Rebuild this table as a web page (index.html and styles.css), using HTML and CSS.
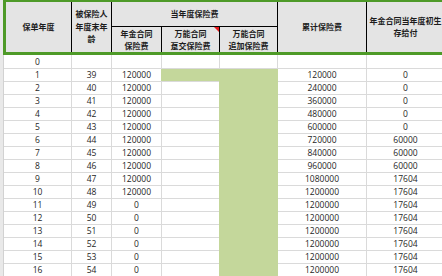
FILE: index.html
```html
<!DOCTYPE html>
<html lang="zh">
<head>
<meta charset="utf-8">
<title>保单年度表</title>
<link rel="stylesheet" href="styles.css">
</head>
<body>
<div class="sheet">
  <div class="strip"></div>
  <div class="main">
    <div class="head">
      <div class="hc span-rows c1">保单年度</div>
      <div class="hc span-rows c2">被保险人年度末年龄</div>
      <div class="hc group">当年度保险费</div>
      <div class="hc sub">年金合同<br>保险费</div>
      <div class="hc sub note">万能合同<br>趸交保险费<span class="tri"></span></div>
      <div class="hc sub">万能合同<br>追加保险费</div>
      <div class="hc span-rows c6">累计保险费</div>
      <div class="hc span-rows c7">年金合同当年度初生<br>存给付</div>
      <div class="hc span-rows c8"></div>
    </div>
    <div class="body">
      <div class="fill-col"></div>

      <div class="c">0</div><div class="c"></div><div class="c"></div><div class="c"></div><div class="c"></div><div class="c"></div><div class="c"></div><div class="c"></div>
      <div class="c">1</div><div class="c">39</div><div class="c">120000</div><div class="fill-row"></div><div class="c">120000</div><div class="c">0</div><div class="c"></div>
      <div class="c">2</div><div class="c">40</div><div class="c">120000</div><div class="c"></div><div class="c">240000</div><div class="c">0</div><div class="c"></div>
      <div class="c">3</div><div class="c">41</div><div class="c">120000</div><div class="c"></div><div class="c">360000</div><div class="c">0</div><div class="c"></div>
      <div class="c">4</div><div class="c">42</div><div class="c">120000</div><div class="c"></div><div class="c">480000</div><div class="c">0</div><div class="c"></div>
      <div class="c">5</div><div class="c">43</div><div class="c">120000</div><div class="c"></div><div class="c">600000</div><div class="c">0</div><div class="c"></div>
      <div class="c">6</div><div class="c">44</div><div class="c">120000</div><div class="c"></div><div class="c">720000</div><div class="c">60000</div><div class="c"></div>
      <div class="c">7</div><div class="c">45</div><div class="c">120000</div><div class="c"></div><div class="c">840000</div><div class="c">60000</div><div class="c"></div>
      <div class="c">8</div><div class="c">46</div><div class="c">120000</div><div class="c"></div><div class="c">960000</div><div class="c">60000</div><div class="c"></div>
      <div class="c">9</div><div class="c">47</div><div class="c">120000</div><div class="c"></div><div class="c">1080000</div><div class="c">17604</div><div class="c"></div>
      <div class="c">10</div><div class="c">48</div><div class="c">120000</div><div class="c"></div><div class="c">1200000</div><div class="c">17604</div><div class="c"></div>
      <div class="c">11</div><div class="c">49</div><div class="c">0</div><div class="c"></div><div class="c">1200000</div><div class="c">17604</div><div class="c"></div>
      <div class="c">12</div><div class="c">50</div><div class="c">0</div><div class="c"></div><div class="c">1200000</div><div class="c">17604</div><div class="c"></div>
      <div class="c">13</div><div class="c">51</div><div class="c">0</div><div class="c"></div><div class="c">1200000</div><div class="c">17604</div><div class="c"></div>
      <div class="c">14</div><div class="c">52</div><div class="c">0</div><div class="c"></div><div class="c">1200000</div><div class="c">17604</div><div class="c"></div>
      <div class="c">15</div><div class="c">53</div><div class="c">0</div><div class="c"></div><div class="c">1200000</div><div class="c">17604</div><div class="c"></div>
      <div class="c">16</div><div class="c">54</div><div class="c">0</div><div class="c"></div><div class="c">1200000</div><div class="c">17604</div><div class="c"></div>
    </div>
  </div>
</div>
</body>
</html>
```
FILE: styles.css
```css
html, body {
  margin: 0;
  padding: 0;
  width: 442px;
  height: 276px;
  background: #ffffff;
  overflow: hidden;
}

.sheet {
  display: flex;
  width: 442px;
  height: 276px;
  overflow: hidden;
}

.strip {
  flex: 0 0 3px;
  background: #e9e9e9;
}

.main {
  display: flex;
  flex-direction: column;
  align-items: flex-start;
  flex: 0 0 auto;
}

.head {
  display: grid;
  grid-template-columns: 65px 39px 49px 57px 57px 88px 77px 60px;
  grid-template-rows: 24px 25px;
  gap: 1px;
  background: #000000;
  border-top: 2px solid #4e9a28;
  border-left: 3px solid #4e9a28;
  border-bottom: 3px solid #4e9a28;
}

.hc {
  background: #e4e4e4;
  display: flex;
  align-items: center;
  justify-content: center;
  text-align: center;
  font-family: "Noto Sans CJK SC", "Noto Sans", sans-serif;
  font-weight: bold;
  font-size: 8px;
  line-height: 12.5px;
  color: #1c1c1c;
}

.span-rows {
  grid-row: 1 / 3;
}

.c1 { grid-column: 1; }
.c2 { grid-column: 2; padding: 0 3px; }
.c6 { grid-column: 6; }
.c7 { grid-column: 7; white-space: nowrap; }
.c8 { grid-column: 8; }

.group {
  grid-column: 3 / 6;
  grid-row: 1;
}

.sub {
  grid-row: 2;
  line-height: 12px;
}

.note {
  position: relative;
}

.tri {
  position: absolute;
  top: 0;
  right: 0;
  width: 0;
  height: 0;
  border-top: 5px solid #e8191c;
  border-left: 5px solid transparent;
}

.body {
  display: grid;
  grid-template-columns: 67px 39px 49px 57px 57px 88px 77px 60px;
  grid-template-rows: 13px repeat(16, 12px);
  gap: 1px;
  background: #dadada;
  border-left: 1px solid #d2d2d2;
}

.c {
  background: #ffffff;
  display: flex;
  align-items: center;
  justify-content: center;
  font-family: "Open Sans", "Noto Sans CJK SC", sans-serif;
  font-size: 8.5px;
  line-height: 12px;
  color: #262626;
}

.fill-row {
  grid-column: span 2;
  background: #c4d79b;
  margin: 0 -1px;
}

.fill-col {
  grid-column: 5;
  grid-row: 3 / 18;
  background: #c4d79b;
  margin: -1px -1px 0 -1px;
}
```
